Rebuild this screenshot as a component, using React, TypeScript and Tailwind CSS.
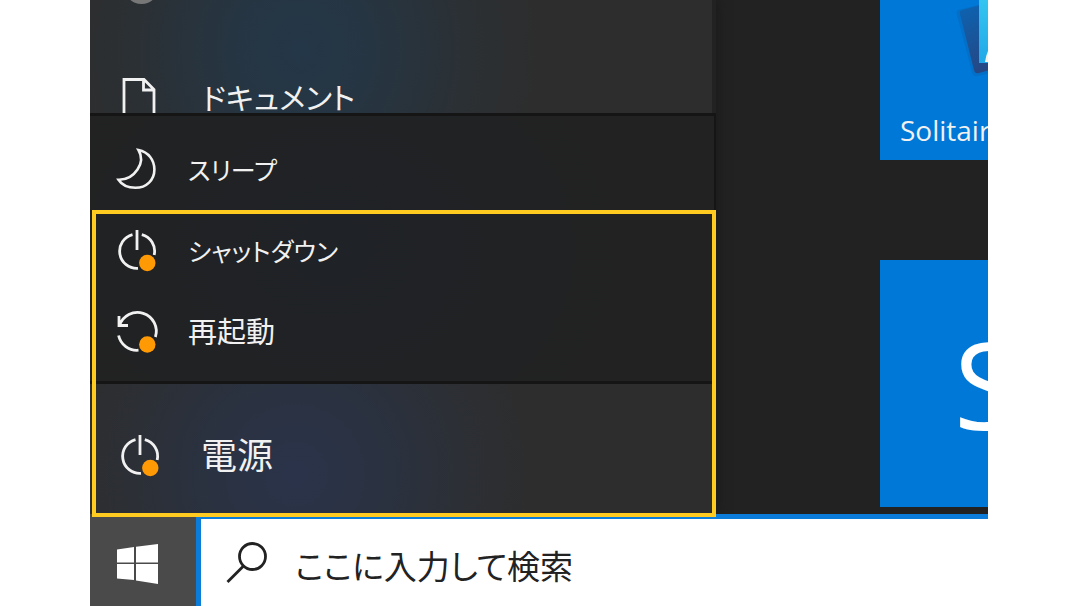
import type { ReactNode } from "react";

function PowerIcon() {
  return (
    <svg className="size-12 shrink-0" viewBox="0 0 48 48" fill="none" stroke="#f1f1f1" strokeWidth="2.8" aria-hidden="true">
      <path d="M24 3v20M19.5 7.6A17.2 17.2 0 0 0 25 41.4M28.8 7.6A17.2 17.2 0 0 1 41.2 28" />
      <circle cx="34.3" cy="36" r="8.2" fill="#ff9a05" stroke="none" />
    </svg>
  );
}

function RestartIcon() {
  return (
    <svg className="size-12 shrink-0" viewBox="0 0 48 48" fill="none" stroke="#f1f1f1" strokeWidth="2.8" aria-hidden="true">
      <path d="M6 8V17.500H15M6.5 17.500A18.7 18.7 0 0 1 42.4 29M5.6 27.500A18.7 18.7 0 0 0 25.5 42.2" />
      <circle cx="34.3" cy="36.5" r="8.2" fill="#ff9a05" stroke="none" />
    </svg>
  );
}

function SleepIcon() {
  return (
    <svg className="size-12 shrink-0" viewBox="0 0 48 48" fill="none" stroke="#f1f1f1" strokeWidth="2.6" aria-hidden="true">
      <path d="M25.5 4C35.5 6 41.4 14 41.4 23.5C41.4 34 33.5 41.8 22.5 41.8C14.500 41.8 8.500 38.5 5.500 33.8C14 34 20.500 29.500 24.500 23.500C29 17 29 10 25.500 4Z" />
    </svg>
  );
}

function DocumentIcon() {
  return (
    <svg className="size-12 shrink-0" viewBox="0 0 48 48" fill="none" stroke="#f1f1f1" strokeWidth="2.8" aria-hidden="true">
      <path d="M8 45V5.500H28L38 15.500V45ZM27.500 5.500V16H38" />
    </svg>
  );
}

function MenuItem({ icon, children }: { icon: ReactNode; children: ReactNode }) {
  return (
    <button type="button" className="flex h-[81px] w-full items-center gap-[27px] pl-[23px] text-left leading-10">
      {icon}
      {children}
    </button>
  );
}

export default function App() {
  return (
    <div className="min-h-screen bg-white px-[90px] font-['Open_Sans','Noto_Sans_CJK_JP',sans-serif] font-normal text-[#f1f1f1] [font-feature-settings:'palt']">
      <div className="flex min-h-screen flex-col overflow-hidden bg-[#222222]">
        <main className="flex h-[514px]">
          <nav className="relative flex w-[626px] shrink-0 flex-col shadow-[0_0_12px_#181818]" aria-label="スタート">
            <div className="mr-1 h-[113px] overflow-hidden bg-[#2d2d2d] bg-[radial-gradient(ellipse_240px_260px_at_210px_50px,#243748_0%,#263542_30%,#2b3034_70%,#2d2d2d_100%)]">
              <ul className="-mt-[70px]">
                <li className="flex h-28 items-center pl-[34px]">
                  <span className="size-[35px] rounded-full bg-[#777777]" />
                </li>
                <li>
                  <a href="#documents" className="flex h-28 items-center gap-[38px] pl-[26px] text-[30px] leading-10">
                    <DocumentIcon />
                    <span>ドキュメント</span>
                  </a>
                </li>
              </ul>
            </div>
            <div className="border-y-3 border-r-2 border-[#151515] bg-[#222222] bg-[radial-gradient(ellipse_300px_240px_at_240px_134px,#1f2227_0%,#222222_100%)] pt-[13px] pb-[9px]">
              <MenuItem icon={<SleepIcon />}>
                <span className="text-[25px]">スリープ</span>
              </MenuItem>
              <MenuItem icon={<PowerIcon />}>
                <span className="text-[25px]">シャットダウン</span>
              </MenuItem>
              <MenuItem icon={<RestartIcon />}>
                <span className="text-[29px]">再起動</span>
              </MenuItem>
            </div>
            <button
              type="button"
              className="mr-1 flex flex-1 items-center gap-[37px] bg-[#2d2d2d] bg-[radial-gradient(ellipse_240px_240px_at_205px_90px,#2a334a_0%,#2a3241_35%,#2c2f35_70%,#2d2d2d_100%)] pt-[14px] pl-[26px] text-left text-[36px] leading-10"
            >
              <PowerIcon />
              <span>電源</span>
            </button>
            <div className="pointer-events-none absolute top-[210px] right-0 -bottom-[3px] left-[2px] z-10 border-4 border-[#ffcb20]" />
          </nav>

          <section className="flex flex-1 flex-col justify-between overflow-hidden pb-[7px] pl-[164px]" aria-label="タイル">
            <a href="#solitaire" className="flex h-40 w-[248px] flex-col justify-between bg-[#0078d7] pb-[10px] pl-5 text-[28px] leading-10">
              <svg className="ml-14 h-20 w-[60px]" viewBox="0 0 60 80" aria-hidden="true">
                <defs>
                  <linearGradient id="back-card" x1="0" y1="0" x2="0.3" y2="1">
                    <stop offset="0" stopColor="#0967b8" />
                    <stop offset="1" stopColor="#254784" />
                  </linearGradient>
                  <linearGradient id="front-card" x1="0" y1="0" x2="0" y2="1">
                    <stop offset="0" stopColor="#35c5f0" />
                    <stop offset="1" stopColor="#22a8e8" />
                  </linearGradient>
                </defs>
                <path d="M2 10Q0 11 1 15L16 72Q17 77 22 76L60 66V-4Z" fill="#0565b8" opacity="0.5" />
                <path d="M6 10Q3 11 4 14L18 70Q19 74 23 73L60 63V-4Z" fill="url(#back-card)" />
                <path d="M23 0H60V63H23Z" fill="url(#front-card)" />
                <path d="M29 62Q30 54 34 47V62Z" fill="#fff1df" />
              </svg>
              <span>Solitaire</span>
            </a>
            <a href="#skype" className="flex h-[247px] w-[248px] items-center bg-[#0078d7] pl-[74px] text-[120px] leading-none text-white">
              S
            </a>
          </section>
        </main>

        <footer className="relative flex min-h-[92px] flex-1 bg-white">
          <button type="button" aria-label="スタート" className="flex w-[106px] shrink-0 items-center justify-center bg-[#4a4a4a] pt-2 pr-3">
            <svg className="h-10 w-[41px]" viewBox="0 0 41 40" fill="#ffffff" aria-hidden="true">
              <path d="M0 5.500L17 3V18.500H0ZM19 2.700L41 0V18.500H19ZM0 20H17V36L0 34.500ZM19 20H41V40L19 36.500Z" />
            </svg>
          </button>
          <label className="flex flex-1 items-center border-t-5 border-l-5 border-[#0c7cdb] pl-[25px]">
            <svg className="size-[41px] shrink-0" viewBox="0 0 41 41" fill="none" stroke="#222222" strokeWidth="2.800" aria-hidden="true">
              <circle cx="26.500" cy="14.500" r="13" />
              <path d="M17.500 24L1.500 40" />
            </svg>
            <input
              type="text"
              aria-label="検索"
              placeholder="ここに入力して検索"
              className="ml-7 min-w-0 flex-1 bg-transparent pt-2 text-[33px] leading-12 text-[#222222] outline-none placeholder:text-[#222222]"
            />
          </label>
        </footer>
      </div>
    </div>
  );
}
